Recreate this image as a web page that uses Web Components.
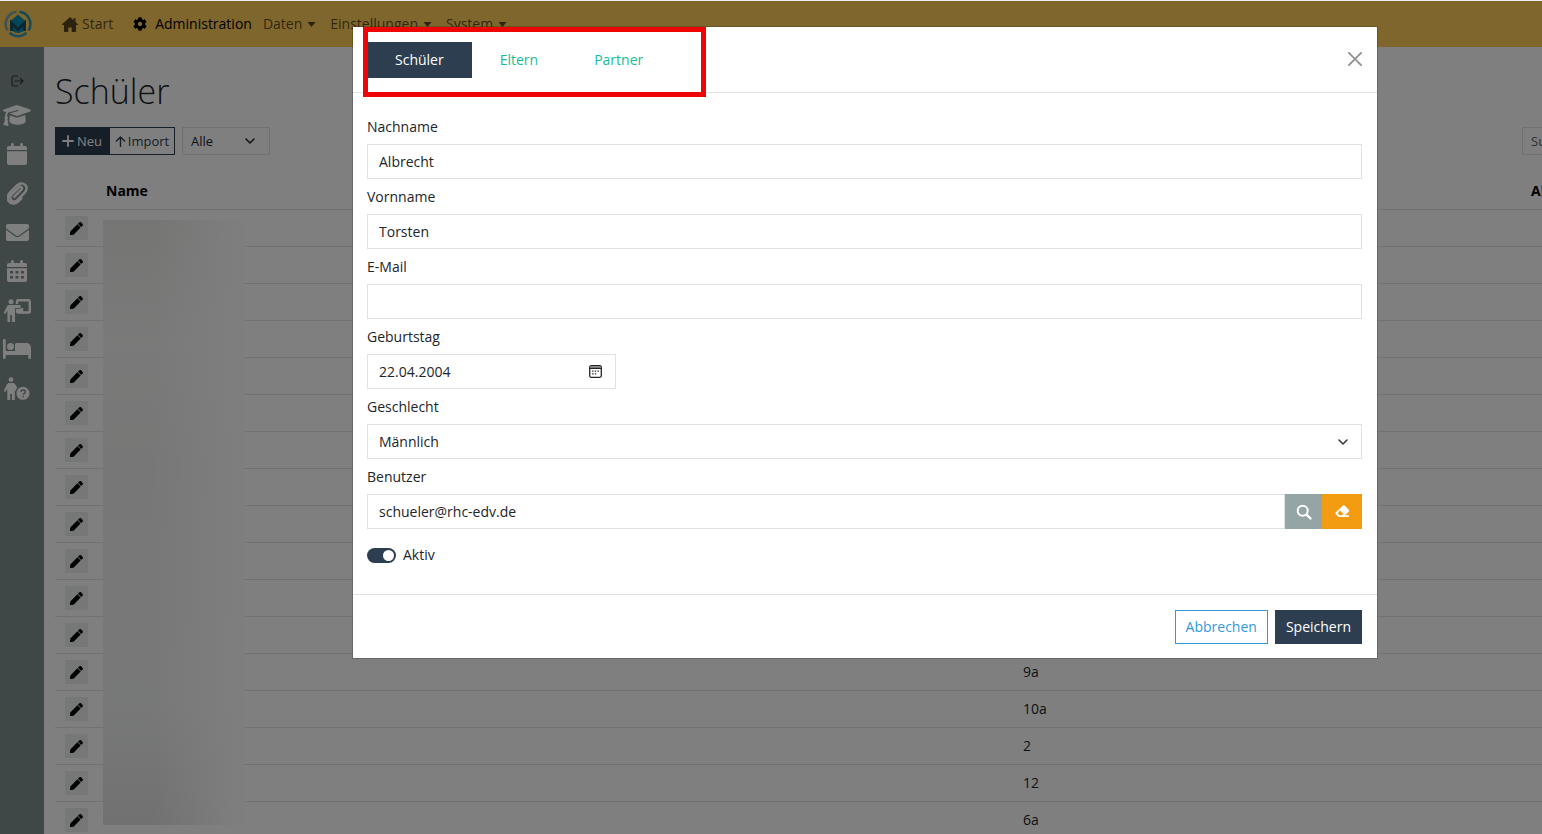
<!DOCTYPE html>
<html lang="de">
<head>
<meta charset="utf-8">
<title>Schüler</title>
<style>
  html, body { margin: 0; height: 100%; overflow: hidden; }
  body { font: 14px/20px "Open Sans", "Noto Sans", sans-serif; color: #212529; background: #fff; }
</style>
</head>
<body>
<app-shell>
  <nav-bar slot="top"></nav-bar>
  <side-bar slot="side"></side-bar>
  <page-head></page-head>
  <student-table></student-table>
  <modal-dialog slot="modal">
    <tab-bar slot="header"></tab-bar>
    <text-field label="Nachname" value="Albrecht"></text-field>
    <text-field label="Vornname" value="Torsten"></text-field>
    <text-field label="E-Mail" value=""></text-field>
    <text-field label="Geburtstag" value="22.04.2004" kind="date"></text-field>
    <select-field label="Geschlecht" options="Männlich,Weiblich"></select-field>
    <text-field label="Benutzer" value="schueler@rhc-edv.de" kind="lookup"></text-field>
    <toggle-switch>Aktiv</toggle-switch>
    <action-button slot="footer" variant="outline">Abbrechen</action-button>
    <action-button slot="footer" variant="solid">Speichern</action-button>
  </modal-dialog>
</app-shell>

<script>
const ICONS = {
  logo: ['0 0 28 28', '<g fill="none" stroke-width="2.600"><path d="M12.500 1.800A12.300 12.300 0 0 0 3.500 20.500" stroke="#7fa3ab"/><path d="M15.500 1.800A12.300 12.300 0 0 1 24.500 20.500" stroke="#2f97a8"/><path d="M5.500 22.800A12.300 12.300 0 0 0 22.500 22.800" stroke="#459fae"/></g><path d="M14 4.500l7.500 6.500v9c-2 1.500-5 3-7.500 3s-5.500-1.500-7.500-3v-9z" fill="#0d8fae"/><path d="M7.500 21v-8l6.500 6.500 6.500-6.500v8" fill="none" stroke="#184a66" stroke-width="2.800"/>'],
  house: ['0 0 16 15', '<path fill="currentColor" d="M8 0 0 7.200c-.3.400 0 .9.500.9H2V14c0 .6.400 1 1 1h3.300v-4.500h3.400V15H13c.6 0 1-.4 1-1V8.100h1.500c.5 0 .8-.5.500-.9L13.500 5V1h-2v2.200z"/>'],
  gear: ['0 0 512 512', '<path fill="currentColor" d="M487.400 315.700l-42.600-24.600c4.300-23.200 4.300-47 0-70.200l42.600-24.600c4.900-2.800 7.100-8.600 5.500-14-11.100-35.600-30-67.800-54.700-94.600-3.800-4.100-10-5.100-14.800-2.300L380.800 110c-17.900-15.400-38.500-27.300-60.800-35.100V25.800c0-5.600-3.900-10.500-9.400-11.700-36.700-8.200-74.300-7.800-109.200 0-5.500 1.200-9.400 6.100-9.400 11.700V75c-22.200 7.900-42.800 19.800-60.800 35.100L88.700 85.500c-4.900-2.800-11-1.900-14.800 2.300-24.700 26.700-43.600 58.900-54.700 94.600-1.700 5.400.6 11.200 5.500 14L67.300 221c-4.300 23.200-4.300 47 0 70.200l-42.600 24.600c-4.900 2.800-7.100 8.600-5.500 14 11.100 35.600 30 67.800 54.700 94.600 3.800 4.100 10 5.100 14.800 2.300l42.600-24.600c17.900 15.400 38.500 27.300 60.800 35.100v49.200c0 5.600 3.900 10.500 9.400 11.700 36.700 8.200 74.300 7.800 109.200 0 5.500-1.200 9.400-6.100 9.400-11.700v-49.200c22.200-7.900 42.800-19.800 60.800-35.100l42.600 24.600c4.900 2.800 11 1.900 14.800-2.300 24.700-26.700 43.600-58.900 54.700-94.600 1.500-5.500-.7-11.300-5.600-14.100zM256 336c-44.100 0-80-35.900-80-80s35.900-80 80-80 80 35.900 80 80-35.900 80-80 80z"/>'],
  caret: ['0 0 9 5', '<path fill="currentColor" d="M.5 0h8l-4 5z"/>'],
  exit: ['0 0 14 14', '<path fill="none" stroke="currentColor" stroke-width="1.200" stroke-linecap="round" stroke-linejoin="round" d="M7.500 2h-4C2.500 2 2 2.500 2 3.500v7c0 1 .5 1.500 1.500 1.500h4M5 7h8M10.500 4.500 13 7l-2.500 2.500"/>'],
  cap: ['0 0 28 21', '<path fill="currentColor" d="M13 .3a3 3 0 0 1 2 0l12.200 4.300c1 .4 1 1.500 0 1.900L15 10.800a3 3 0 0 1-2 0L6.600 8.500 15 6.100c.8-.3.500-1.400-.4-1.200L5.500 7.500c-1 1-1.300 2.200-1.300 3.700 1 .7 1 2 .2 2.700L5.500 20c.1.500-.2 1-.8.900L.8 20c-.6-.2-.7-.6-.4-1.100 1.300-1.700 1.700-3.400 1.600-5-.8-.8-.7-2 .2-2.700 0-1.500.3-3 1.200-4.300L.8 6.500c-1-.4-1-1.500 0-1.900zM6.800 10.300l5.500 2c1.100.4 2.300.4 3.400 0l6.500-2.300.6 6.500c-2 4.200-14 4.500-16.600 0z"/>'],
  calendar: ['0 0 20 22', '<path fill="currentColor" d="M4 1.400a1.400 1.400 0 0 1 2.800 0V3h6.400V1.400a1.400 1.400 0 0 1 2.800 0V3h2c1.200 0 2 .8 2 2v2H0V5c0-1.200.8-2 2-2h2zM0 8.300h20V20c0 1.200-.8 2-2 2H2c-1.200 0-2-.8-2-2z"/>'],
  clip: ['0 0 22 24', '<path fill="none" stroke="currentColor" stroke-width="2.600" stroke-linecap="round" d="M7.500 15.500 15 8c1.700-1.800-.8-4.200-2.500-2.500L5 13c-4.200 4.500 1.500 10 6 5.800l7.500-7.600c6-6.200-2-13.200-8-7.700l-7.200 7.300C-3.500 18.500 5 26.800 12 20.200l3-3"/>'],
  mail: ['0 0 23 17', '<path fill="currentColor" d="M2 0h19c1.200 0 2 .8 2 2v2.200L13 11.500c-1 .7-2 .7-3 0L0 4.200V2C0 .8.800 0 2 0zM0 5.800l9.300 6.800c1.400 1 3 1 4.400 0L23 5.800V15c0 1.200-.8 2-2 2H2c-1.200 0-2-.8-2-2z"/>'],
  days: ['0 0 20 22', '<path fill="currentColor" fill-rule="evenodd" d="M4 1.400a1.400 1.400 0 0 1 2.800 0V3h6.400V1.400a1.400 1.400 0 0 1 2.800 0V3h2c1.200 0 2 .8 2 2v2H0V5c0-1.200.8-2 2-2h2zM0 8.300h20V20c0 1.200-.8 2-2 2H2c-1.200 0-2-.8-2-2zM3 11v2.500h3V11zm5.500 0v2.500h3V11zM14 11v2.500h3V11zM3 16v2.500h3V16zm5.500 0v2.500h3V16zM14 16v2.500h3V16z"/>'],
  teach: ['0 0 27 23', '<circle cx="7" cy="2.700" r="2.500" fill="currentColor"/><path fill="currentColor" d="M5 6h11.500v3H11v14H7.900v-7H6.200v7H3.400V11.600l-1.600 2.600c-1 1.300-2.500.2-1.600-1.200L3 7.500C3.500 6.500 4 6 5 6z"/><path fill="none" stroke="currentColor" stroke-width="2.400" d="M13 5V2.500c0-.8.500-1.300 1.300-1.300h10.200c.8 0 1.300.5 1.300 1.300v9.700c0 .8-.5 1.300-1.300 1.300H14.300c-.8 0-1.300-.5-1.300-1.300V11h5V9"/>'],
  bed: ['0 0 28 20', '<path fill="currentColor" d="M0 1.300a1.300 1.300 0 0 1 2.700 0V12H12V5.500C12 4.600 12.600 4 13.500 4H23c3 0 5 2 5 5v9.700a1.300 1.300 0 0 1-2.700 0V16H2.700v2.700a1.300 1.300 0 0 1-2.700 0z"/><circle cx="7.500" cy="7.500" r="3.500" fill="currentColor"/>'],
  ask: ['0 0 26 23', '<circle cx="7" cy="2.600" r="2.400" fill="currentColor"/><path fill="currentColor" d="M5.200 6h3.600c1.300 0 2 .6 2.500 1.500l2 3.200c-1 1-1.400 2.300-1.600 3.600L10.800 13v10H7.900v-6H6.200v6H3.300V12l-1.500 2.300c-1 1.200-2.500 0-1.600-1.300l2.700-5.500C3.400 6.600 4 6 5.200 6z"/><circle cx="19" cy="16.300" r="6.500" fill="currentColor"/><path d="M17 15c0-2.600 4.300-2.600 4.300 0 0 1.300-2.100 1.300-2.100 2.700M19.200 19v1.500" fill="none" stroke="#7e908c" stroke-width="1.400"/>'],
  pen: ['0 0 512 512', '<path fill="currentColor" d="M290.740 93.240l128.020 128.020-277.990 277.990-114.140 12.600C11.350 513.540-1.560 500.620.14 485.340l12.700-114.220 277.900-277.880zm207.200-19.060l-60.110-60.110c-18.750-18.750-49.160-18.750-67.910 0l-56.550 56.550 128.020 128.020 56.550-56.550c18.750-18.760 18.750-49.160 0-67.910z"/>'],
  plus: ['0 0 12 12', '<path stroke="currentColor" stroke-width="1.800" stroke-linecap="round" d="M6 1v10M1 6h10"/>'],
  up: ['0 0 12 12', '<path fill="none" stroke="currentColor" stroke-width="1.500" stroke-linecap="round" stroke-linejoin="round" d="M6 11.500V1M1.500 5.500 6 1l4.500 4.500"/>'],
  chevron: ['0 0 12 12', '<path fill="none" stroke="currentColor" stroke-width="1.600" stroke-linecap="round" stroke-linejoin="round" d="m2 4 4 4 4-4"/>'],
  close: ['0 0 14 14', '<path fill="none" stroke="currentColor" stroke-width="1.800" stroke-linecap="round" d="m.9.9 12.200 12.200M13.100.9.9 13.100"/>'],
  date: ['0 0 13 13', '<rect x=".7" y=".7" width="11.600" height="11.600" rx="1.500" fill="none" stroke="currentColor" stroke-width="1.300"/><path fill="#777" d="M1.300 1.300h10.400v2H1.300z"/><path stroke="currentColor" d="M1 3.500h11"/><path fill="currentColor" d="M5.800 5.500h1.400v1.300H5.800zm2.700 0h1.400v1.300H8.500zM3.100 8.200h1.400v1.300H3.100zm2.700 0h1.400v1.300H5.800zM3.100 5.500h1.400v1.300H3.100z"/>'],
  search: ['0 0 16 16', '<circle cx="6.700" cy="6.700" r="5" fill="none" stroke="currentColor" stroke-width="2"/><path stroke="currentColor" stroke-width="2.400" stroke-linecap="round" d="m10.800 10.800 3.700 3.700"/>'],
  eraser: ['0 0 16 14', '<path fill="currentColor" fill-rule="evenodd" d="M8.300.8c.7-.7 1.500-.7 2.200 0l4.200 4.200c.7.700.7 1.500 0 2.200L10.500 11H15v2H4.500c-.5 0-.9-.2-1.200-.5L.9 10.100c-.7-.7-.7-1.500 0-2.200zM5.500 6 2.700 9 5 11h2.500L9 9.500z"/>']
};

function define(name, render) {
  customElements.define(name, class extends HTMLElement {
    constructor() { super(); this.attachShadow({ mode: 'open' }); }
    connectedCallback() {
      const t = document.createElement('template');
      t.innerHTML = render(this);
      this.shadowRoot.replaceChildren(t.content.cloneNode(true));
    }
  });
}

const BASE = '*,*::before,*::after{box-sizing:border-box}button,input,select{font:inherit;color:inherit;margin:0;border-radius:0;outline:0}button{padding:0;border:0;cursor:pointer}select{appearance:none}';
const icon = (name, w, h = w) => `<ui-icon name="${name}" style="width:${w}px;height:${h}px"></ui-icon>`;

define('ui-icon', el => {
  const [box, body] = ICONS[el.getAttribute('name')];
  return `<style>:host{display:inline-block;flex:none}svg{display:block;width:100%;height:100%}</style>
    <svg viewBox="${box}" aria-hidden="true">${body}</svg>`;
});

/* The desk is laid out wider than the window; its right edge runs off screen. */
define('app-shell', () => `<style>${BASE}
  :host{display:block;height:100vh;overflow:hidden;border-top:1px solid #e9eeee;box-sizing:border-box}
  .desk{position:relative;display:grid;grid-template:46px 1fr / 44px 1fr;width:calc(100% + 188px);height:100%}
  main{padding:21px 11px 0;min-width:0;overflow:hidden}
  .backdrop{position:absolute;inset:0;background:rgba(0,0,0,.5);padding-top:26px}
  </style>
  <div class="desk">
    <slot name="top"></slot>
    <slot name="side"></slot>
    <main><slot></slot></main>
    <div class="backdrop"><slot name="modal"></slot></div>
  </div>`);

define('nav-bar', () => `<style>${BASE}
  :host{display:block;grid-column:1 / -1;background:#ffcc59}
  nav{display:flex;align-items:center;height:46px;padding-left:4px}
  a{display:flex;align-items:center;color:rgba(0,0,0,.65);text-decoration:none;margin-right:14px;gap:5px}
  a.logo{margin-right:30px}
  a.home{gap:4px;margin-right:20px}
  a.on{color:#000;gap:8px;margin-right:11px}
  </style>
  <nav>
    <a class="logo" href="#" aria-label="Startseite">${icon('logo', 28)}</a>
    <a class="home" href="#">${icon('house', 16, 15)}Start</a>
    <a class="on" href="#">${icon('gear', 14)}Administration</a>
    <a href="#">Daten${icon('caret', 9, 5)}</a>
    <a href="#">Einstellungen${icon('caret', 9, 5)}</a>
    <a href="#">System${icon('caret', 9, 5)}</a>
  </nav>`);

define('side-bar', () => `<style>${BASE}
  :host{display:block;background:#7e908c}
  nav{display:flex;flex-direction:column;align-items:center;gap:15px;padding:27px 10px 0 0}
  a{display:flex;align-items:center;justify-content:center;height:24px;width:28px;color:#fff}
  a.exit{height:14px;color:#333b39}
  </style>
  <nav>
    <a class="exit" href="#" aria-label="Abmelden">${icon('exit', 14)}</a>
    <a href="#" aria-label="Schüler">${icon('cap', 28, 21)}</a>
    <a href="#" aria-label="Kalender">${icon('calendar', 20, 22)}</a>
    <a href="#" aria-label="Anhänge">${icon('clip', 21, 23)}</a>
    <a href="#" aria-label="Nachrichten">${icon('mail', 23, 17)}</a>
    <a href="#" aria-label="Termine">${icon('days', 20, 22)}</a>
    <a href="#" aria-label="Unterricht">${icon('teach', 27, 23)}</a>
    <a href="#" aria-label="Internat">${icon('bed', 28, 20)}</a>
    <a href="#" aria-label="Anfragen">${icon('ask', 26, 23)}</a>
  </nav>`);

define('page-head', () => `<style>${BASE}
  :host{display:block}
  h1{margin:0 0 13px;font-size:34px;line-height:46px;font-weight:300;color:#212529}
  .bar{display:flex;height:28px;font-size:13px}
  button{display:flex;align-items:center;justify-content:center;gap:3px;border:1px solid #2c3e50}
  .new{width:54px;background:#2c3e50;color:#fff}
  .import{width:66px;background:none;color:#2c3e50;gap:2px}
  .filter{position:relative;display:flex;align-items:center;width:88px;margin-left:7px}
  .filter ui-icon{position:absolute;right:14px;pointer-events:none}
  select{width:100%;height:28px;padding:0 8px;border:1px solid #dee2e6;background:none}
  .search{width:197px;margin-left:auto;padding:0 8px;border:1px solid #dee2e6;background:none}
  .search::placeholder{color:#5b6064;opacity:1}
  </style>
  <h1>Schüler</h1>
  <div class="bar">
    <button class="new">${icon('plus', 12)}Neu</button>
    <button class="import">${icon('up', 11)}Import</button>
    <div class="filter"><select aria-label="Filter"><option>Alle</option></select>${icon('chevron', 12)}</div>
    <input class="search" aria-label="Suche" placeholder="Suche">
  </div>`);

define('student-table', () => {
  const classes = [...Array(12).fill(''), '9a', '10a', '2', '12', '6a'];
  const rows = classes.map(c => `<tr><td class="edit"><button aria-label="Bearbeiten">${icon('pen', 13)}</button></td><td></td><td>${c}</td><td></td></tr>`).join('');
  return `<style>${BASE}
  :host{display:block;position:relative;margin-top:18px}
  table{width:100%;table-layout:fixed;border-collapse:separate;border-spacing:0}
  th,td{height:37px;padding:0 4px;border-bottom:1px solid #dee2e6;text-align:left;vertical-align:middle}
  th{color:#000;font-weight:700}
  .edit{padding:0 0 0 10px}
  button{display:flex;align-items:center;justify-content:center;width:23px;height:24px;background:#ecf0f1;color:#000}
  .c1{width:47px}.c3{width:508px}.c4{width:192px}
  .veil{position:absolute;left:48px;top:47px;width:142px;height:605px;
    background:linear-gradient(to right,transparent 35%,#fdfdfd 95%),linear-gradient(#ebebe9,#f4f4f3 20%,#efefee 40%,#eff1f0 80%,#e2e2e2)}
  </style>
  <table>
    <colgroup><col class="c1"><col><col class="c3"><col class="c4"></colgroup>
    <thead><tr><th></th><th>Name</th><th></th><th>Aktiv</th></tr></thead>
    <tbody>${rows}</tbody>
  </table>
  <div class="veil"></div>`;
});

define('modal-dialog', () => `<style>${BASE}
  :host{display:block;width:1024px;max-width:100%;margin:0 auto;background:#fff;box-shadow:0 0 0 1px rgba(0,0,0,.18)}
  header{position:relative;display:flex;justify-content:space-between;align-items:flex-start;padding:15px 14px 14px;border-bottom:1px solid #dee2e6}
  .close{display:flex;margin:10px 1px 0 0;background:none;color:#909090}
  .mark{position:absolute;left:10px;top:0;width:343px;height:70px;border:5px solid #ee0606;pointer-events:none}
  .body{display:flex;flex-direction:column;gap:8px;padding:24px 15px 28px 14px}
  footer{display:flex;justify-content:flex-end;gap:7px;padding:15px 15px 14px;border-top:1px solid #dee2e6}
  </style>
  <div role="dialog" aria-label="Schüler bearbeiten">
    <header><slot name="header"></slot><button class="close" aria-label="Schließen">${icon('close', 14)}</button><div class="mark"></div></header>
    <div class="body"><slot></slot></div>
    <footer><slot name="footer"></slot></footer>
  </div>`);

define('tab-bar', () => `<style>${BASE}
  :host{display:flex}
  button{height:36px;padding:0 28px;background:none;color:#18bc9c}
  .on{background:#2c3e50;color:#fff}
  </style>
  <button class="on">Schüler</button><button>Eltern</button><button>Partner</button>`);

const FIELD = `${BASE}
  :host{display:block}
  label{display:block;margin-bottom:7px}
  .row{position:relative;display:flex}
  input,select{flex:1;min-width:0;height:35px;padding:0 11px;border:1px solid #dee2e6;background:#fff}`;

define('text-field', el => {
  const kind = el.getAttribute('kind') || 'plain';
  const extra = {
    plain: '',
    date: `<button class="pick" aria-label="Datum wählen">${icon('date', 13)}</button>`,
    lookup: `<button class="find" aria-label="Suchen">${icon('search', 16)}</button><button class="clear" aria-label="Leeren">${icon('eraser', 15, 13)}</button>`
  }[kind];
  return `<style>${FIELD}
  .date{width:25%}
  .pick{position:absolute;right:14px;top:11px;display:flex;background:none}
  .find,.clear{display:flex;align-items:center;justify-content:center;color:#fff}
  .find{width:37px;background:#95a5a6}
  .clear{width:40px;background:#f39c12}
  </style>
  <label for="f">${el.getAttribute('label')}</label>
  <div class="row ${kind}"><input id="f" type="text" value="${el.getAttribute('value')}">${extra}</div>`;
});

define('select-field', el => `<style>${FIELD}
  ui-icon{position:absolute;right:13px;top:12px;color:#343a40;pointer-events:none}
  </style>
  <label for="f">${el.getAttribute('label')}</label>
  <div class="row"><select id="f">${el.getAttribute('options').split(',').map(o => `<option>${o}</option>`).join('')}</select>${icon('chevron', 12)}</div>`);

define('toggle-switch', () => `<style>${BASE}
  :host{display:block;margin-top:8px}
  label{display:inline-flex;align-items:center;gap:7px}
  input{appearance:none;width:29px;height:15px;border-radius:8px;background:#adb5bd;padding:2px;display:flex}
  input::before{content:"";width:11px;height:11px;border-radius:50%;background:#fff}
  input:checked{background:#2c3e50;justify-content:flex-end}
  </style>
  <label><input type="checkbox" role="switch" checked><slot></slot></label>`);

define('action-button', el => `<style>${BASE}
  :host{display:block}
  button{height:34px;padding:0 10px;border:1px solid #2c3e50}
  .solid{background:#2c3e50;color:#fff}
  .outline{background:#fff;color:#3498db;border-color:#3498db}
  </style>
  <button class="${el.getAttribute('variant')}"><slot></slot></button>`);
</script>
</body>
</html>
